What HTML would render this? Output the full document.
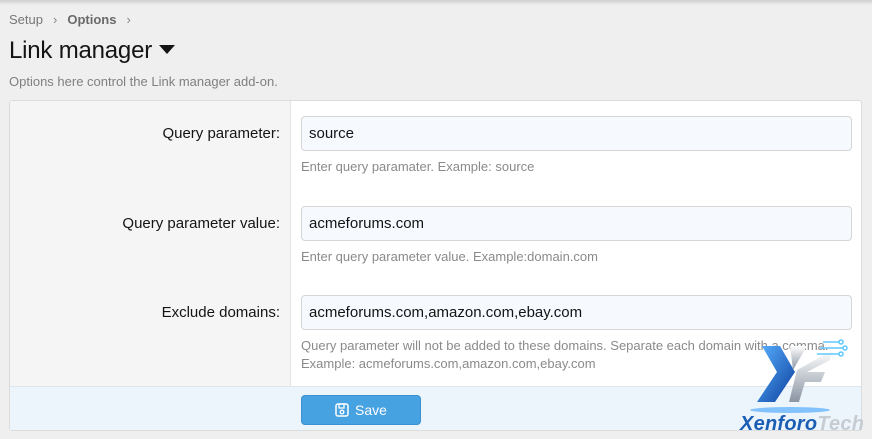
<!DOCTYPE html>
<html><head><meta charset="utf-8"><style>
*{box-sizing:border-box;margin:0;padding:0}
body{width:872px;height:439px;overflow:hidden;background:#efefef;font-family:"Liberation Sans",Arial,sans-serif;position:relative}
.top{position:absolute;left:0;top:0;width:872px;height:5px;background:linear-gradient(#cfcfcf,#efefef)}
.crumb{position:absolute;left:9px;top:12px;font-size:13px;color:#777}
.crumb b{color:#6a6a6a}
.crumb span{margin:0 10px;color:#888}
h1{position:absolute;left:9px;top:37px;font-size:24px;font-weight:normal;color:#141414;letter-spacing:-0.2px}
.desc{position:absolute;left:9px;top:74px;font-size:13px;color:#808080}
.panel{position:absolute;left:9px;top:100px;width:853px;height:331px;border:1px solid #dcdcdc;background:#fff;border-radius:3px;overflow:hidden}
.left{position:absolute;left:0;top:0;width:281px;height:286px;background:#f5f5f5;border-right:1px solid #e4e4e4}
.lbl{position:absolute;right:581px;font-size:15px;color:#141414;text-align:right;white-space:nowrap}
.inp{position:absolute;left:291px;width:551px;height:35px;border:1px solid #d6d6d6;border-radius:4px;background:#f6faff;font-size:15px;color:#141414;padding:8px 7px}
.hint{position:absolute;left:291px;font-size:13px;color:#8a8a8a;line-height:18px}
.foot{position:absolute;left:0;top:285px;width:853px;height:46px;background:#edf5fc;border-top:1px solid #dde6ee}
.btn{position:absolute;left:291px;top:8px;width:120px;height:30px;background:#47a2e2;border:1px solid #3b92d0;border-radius:4px;color:#fff;font-size:14px;text-align:center;line-height:28px}
</style></head><body>
<div class="top"></div>
<div class="crumb">Setup<span>›</span><b>Options</b><span>›</span></div>
<h1>Link manager <svg width="16" height="10" viewBox="0 0 16 10" style="vertical-align:3px"><path d="M0 0 H16 L8 9 Z" fill="#141414"/></svg></h1>
<div class="desc">Options here control the Link manager add-on.</div>
<div class="panel">
<div class="left"></div>
<div class="lbl" style="top:24px">Query parameter:</div>
<div class="inp" style="top:15px">source</div>
<div class="hint" style="top:57px">Enter query paramater. Example: source</div>
<div class="lbl" style="top:114px">Query parameter value:</div>
<div class="inp" style="top:105px">acmeforums.com</div>
<div class="hint" style="top:147px">Enter query parameter value. Example:domain.com</div>
<div class="lbl" style="top:203px">Exclude domains:</div>
<div class="inp" style="top:194px">acmeforums.com,amazon.com,ebay.com</div>
<div class="hint" style="top:236px">Query parameter will not be added to these domains. Separate each domain with a comma.<br>Example: acmeforums.com,amazon.com,ebay.com</div>
<div class="foot"><div class="btn"><svg width="14" height="14" viewBox="0 0 14 14" style="vertical-align:-2px;margin-right:6px"><rect x="1" y="1" width="12" height="12" rx="2" fill="none" stroke="#fff" stroke-width="1.5"/><rect x="4" y="1" width="5" height="4" fill="none" stroke="#fff" stroke-width="1.3"/><circle cx="7" cy="9" r="1.8" fill="none" stroke="#fff" stroke-width="1.3"/></svg>Save</div></div>
</div>
<svg style="position:absolute;left:735px;top:330px" width="137" height="109" viewBox="0 0 137 109">
<defs><linearGradient id="b" x1="0" y1="0" x2="1" y2="1"><stop offset="0" stop-color="#5ab0ff"/><stop offset="1" stop-color="#0a3f9e"/></linearGradient><linearGradient id="s" x1="0" y1="0" x2="0" y2="1"><stop offset="0" stop-color="#fff"/><stop offset="1" stop-color="#8a95a3"/></linearGradient></defs>
<path d="M27 16 L45 16 L60 42 L40 72 L22 72 L42 42 Z" fill="url(#b)"/>
<path d="M55 16 L72 16 L58 40 Z" fill="url(#s)"/>
<path d="M62 40 L98 20 L95 30 L72 42 L90 42 L86 52 L70 52 L64 72 L54 72 Z" fill="url(#s)"/>
<g stroke="#5ec8ff" stroke-width="1.5" fill="none"><path d="M88 12 H104"/><path d="M85 18 H108"/><path d="M82 24 H104"/><circle cx="106" cy="12" r="2"/><circle cx="110" cy="18" r="2"/><circle cx="106" cy="24" r="2"/></g>
<ellipse cx="55" cy="80" rx="40" ry="3" fill="#3aa0ff" opacity=".6"/>
<text x="5" y="100" font-family="Liberation Sans,sans-serif" font-weight="bold" font-style="italic" font-size="20" textLength="124" fill="#1b5fb5">Xenforo<tspan fill="#c7ccd3">Tech</tspan></text>
</svg>
</body></html>
